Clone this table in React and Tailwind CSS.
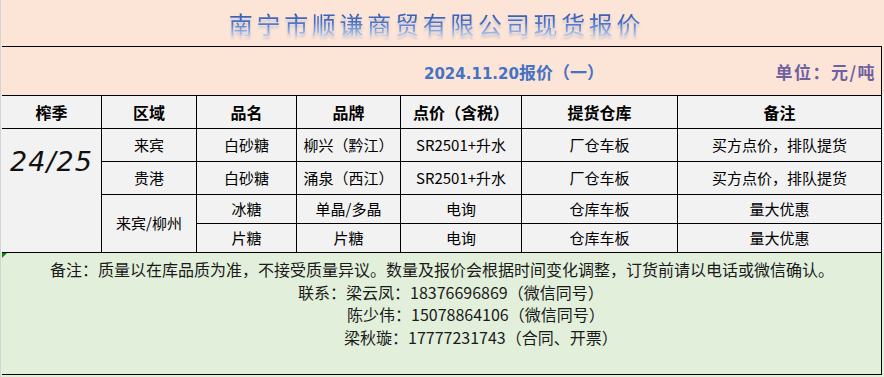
const cjk = "font-['Noto_Sans_CJK_SC','Noto_Sans',sans-serif]";

const heads = ["榨季", "区域", "品名", "品牌", "点价（含税）", "提货仓库", "备注"];

const cell = "flex items-center justify-center border-r border-b border-black";

function App() {
  return (
    <div className={`w-[884px] h-[377px] overflow-hidden border-l border-[#d4d4d4] bg-[#e2efda] text-black ${cjk}`}>
      {/* title */}
      <div className="h-[46px] bg-[#fce4d6] flex items-center justify-center pr-[12px]">
        <h1 className="text-[24px] leading-none tracking-[3.7px] font-normal pt-[2px] bg-gradient-to-b from-[#2c52ad] via-[#4a74c6] to-[#b9cdf0] bg-clip-text text-transparent [filter:drop-shadow(0_3px_1px_rgba(120,150,210,0.35))]">
          南宁市顺谦商贸有限公司现货报价
        </h1>
      </div>

      {/* date row */}
      <div className="bg-[#fce4d6]">
        <div className="ml-px w-[880px] h-[49px] border-t border-r border-black flex items-center justify-between pl-[422px] pr-[5px] pt-[2px]">
          <div className="flex items-baseline font-bold text-[#4472c4]">
            <span className="font-['DejaVu_Sans',sans-serif] text-[15px]">2024.11.20</span>
            <span className="text-[17px]">报价（一）</span>
          </div>
          <div className="text-[17px] font-bold tracking-[1.5px] text-[#6e62a0]">单位：元/吨</div>
        </div>
      </div>

      {/* table */}
      <div className="bg-[#f2f2f2]">
        <div className="ml-px w-[880px] border-t border-black grid grid-cols-[100px_95px_100px_104px_121px_156px_204px] grid-rows-[33px_33px_33px_29px_29px] text-[15px]">
          {heads.map((h) => (
            <div key={h} className={`${cell} font-bold text-[16px]`}>
              {h}
            </div>
          ))}

          <div className={`row-span-4 flex justify-center border-r border-b border-black pt-[19px]`}>
            <span className="font-['DejaVu_Sans',sans-serif] italic text-[27px] leading-none tracking-[1px] text-[#111]">24/25</span>
          </div>

          <div className={cell}>来宾</div>
          <div className={cell}>白砂糖</div>
          <div className={cell}>柳兴（黔江）</div>
          <div className={cell}>SR2501+升水</div>
          <div className={cell}>厂仓车板</div>
          <div className={cell}>买方点价，排队提货</div>

          <div className={cell}>贵港</div>
          <div className={cell}>白砂糖</div>
          <div className={cell}>涌泉（西江）</div>
          <div className={cell}>SR2501+升水</div>
          <div className={cell}>厂仓车板</div>
          <div className={cell}>买方点价，排队提货</div>

          <div className={`${cell} row-span-2`}>来宾/柳州</div>
          <div className={cell}>冰糖</div>
          <div className={cell}>单晶/多晶</div>
          <div className={cell}>电询</div>
          <div className={cell}>仓库车板</div>
          <div className={cell}>量大优惠</div>

          <div className={cell}>片糖</div>
          <div className={cell}>片糖</div>
          <div className={cell}>电询</div>
          <div className={cell}>仓库车板</div>
          <div className={cell}>量大优惠</div>
        </div>
      </div>

      {/* notes */}
      <div className="relative ml-px w-[880px] h-[122px] border-r border-b border-black text-[16px] leading-[22.5px] text-[#1a1a1a] pt-[5px]">
        <span className="absolute left-0 top-0 w-0 h-0 border-t-[5px] border-r-[5px] border-t-[#0a8a0a] border-r-transparent" />
        <p className="ml-[48px]">备注：质量以在库品质为准，不接受质量异议。数量及报价会根据时间变化调整，订货前请以电话或微信确认。</p>
        <p className="ml-[296px]">联系：梁云凤：18376696869（微信同号）</p>
        <p className="ml-[345px]">陈少伟：15078864106（微信同号）</p>
        <p className="ml-[342px]">梁秋璇：17777231743（合同、开票）</p>
      </div>
    </div>
  );
}

export default App;
